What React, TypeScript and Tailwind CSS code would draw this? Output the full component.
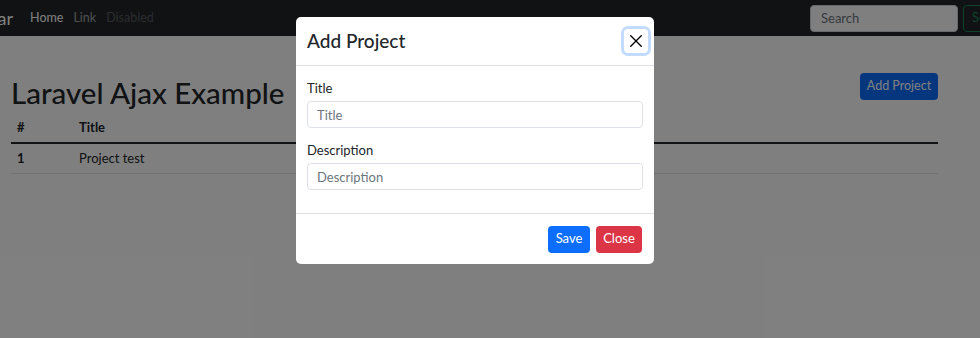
const font = { fontFamily: 'Lato, "Noto Sans", Arial, sans-serif' };

function CloseIcon() {
  return (
    <svg viewBox="0 0 16 16" className="h-[14px] w-[14px]" fill="none" stroke="#000" strokeWidth="1.6" strokeLinecap="round">
      <path d="M2 2l12 12M14 2L2 14" />
    </svg>
  );
}

export default function App() {
  return (
    <div className="relative h-[338px] w-[980px] overflow-hidden bg-white text-[#212529]" style={font}>
      {/* Navbar */}
      <nav className="flex h-[36px] items-center bg-[#212529]">
        <div className="-ml-[44px] flex items-center">
          <span className="text-[18px] text-white">Navbar</span>
          <div className="ml-[17px] flex items-center gap-[10px] text-[12.5px]">
            <span className="text-white">Home</span>
            <span className="text-white/55">Link</span>
            <span className="text-white/25">Disabled</span>
          </div>
        </div>
        <div className="ml-auto mr-[-43px] flex items-center gap-[5px]">
          <input
            className="h-[27px] w-[148px] rounded-[4px] border border-[#ced4da] bg-white px-[10px] text-[13px] outline-none placeholder:text-[#6c757d]"
            placeholder="Search"
          />
          <button className="h-[27px] w-[60px] rounded-[4px] border border-[#198754] px-2 text-left text-[13px] text-[#198754]">
            Search
          </button>
        </div>
      </nav>

      {/* Page */}
      <main className="ml-[11px] w-[927px] pt-[37px]">
        <div className="flex items-start justify-between">
          <h1 className="text-[29.5px] font-medium leading-[40px]">Laravel Ajax Example</h1>
          <button className="h-[27px] w-[78px] rounded-[4px] bg-[#0d6efd] text-[12.5px] text-white">Add Project</button>
        </div>
        <table className="mt-0 w-full text-[13px] leading-[17px]">
          <thead>
            <tr className="border-b-2 border-[#212529]">
              <th className="w-[62px] px-[6px] py-[6px] text-left font-bold">#</th>
              <th className="px-[6px] py-[6px] text-left font-bold">Title</th>
            </tr>
          </thead>
          <tbody>
            <tr className="border-b border-[#dee2e6]">
              <td className="px-[6px] py-[6px] font-bold">1</td>
              <td className="px-[6px] py-[6px]">Project test</td>
            </tr>
          </tbody>
        </table>
      </main>

      {/* Backdrop */}
      <div className="absolute inset-0 bg-black/50" />

      {/* Modal */}
      <div className="absolute left-[296px] top-[17px] w-[358px] rounded-[5px] bg-white">
        <div className="flex h-[49px] items-center justify-between border-b border-[#dee2e6] pl-[11px] pr-[6px]">
          <h5 className="text-[19px] font-medium text-[#212529]">Add Project</h5>
          <button className="flex h-[24px] w-[24px] items-center justify-center rounded-[4px] shadow-[0_0_0_3px_rgba(13,110,253,0.25)]">
            <CloseIcon />
          </button>
        </div>
        <div className="px-[11px] pb-[23px] pt-[13px] text-[13px]">
          <label className="block leading-[18px] text-[#212529]">Title</label>
          <input
            className="mt-[4px] h-[27px] w-full rounded-[4px] border border-[#dee2e6] px-[9px] text-[13px] outline-none placeholder:text-[#6c757d]"
            placeholder="Title"
          />
          <label className="mt-[13px] block leading-[18px] text-[#212529]">Description</label>
          <input
            className="mt-[4px] h-[27px] w-full rounded-[4px] border border-[#dee2e6] px-[9px] text-[13px] outline-none placeholder:text-[#6c757d]"
            placeholder="Description"
          />
        </div>
        <div className="flex h-[51px] items-center justify-end gap-[6px] border-t border-[#dee2e6] px-[12px]">
          <button className="h-[27px] w-[42px] rounded-[4px] bg-[#0d6efd] text-[13px] text-white">Save</button>
          <button className="h-[27px] w-[46px] rounded-[4px] bg-[#dc3545] text-[13px] text-white">Close</button>
        </div>
      </div>
    </div>
  );
}
